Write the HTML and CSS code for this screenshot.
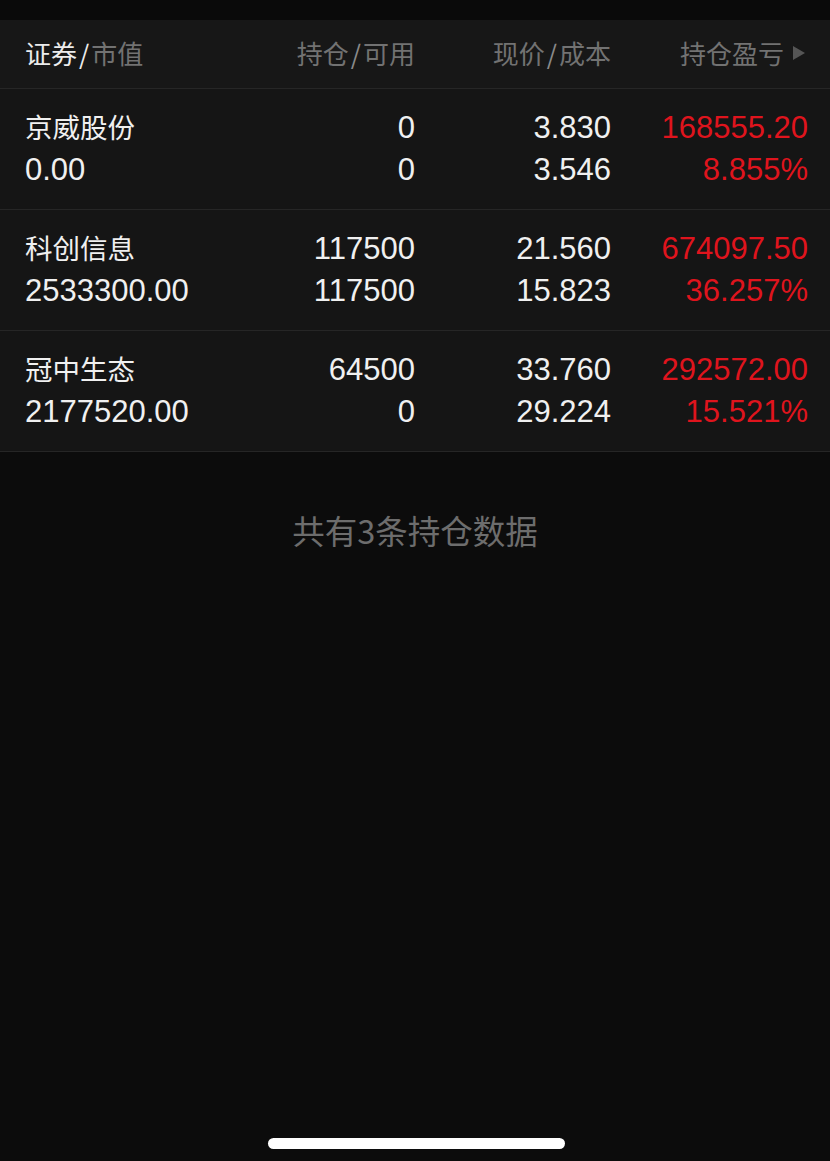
FILE: index.html
```html
<!DOCTYPE html>
<html lang="zh-CN">
<head>
<meta charset="utf-8">
<title>持仓</title>
<link rel="stylesheet" href="styles.css">
</head>
<body>
<div class="screen">
  <div class="statusbar"></div>
  <div class="thead">
    <div class="hcell left"><span class="hl">证券</span><span class="sep">/</span>市值</div>
    <div class="hcell">持仓<span class="sep">/</span>可用</div>
    <div class="hcell">现价<span class="sep">/</span>成本</div>
    <div class="hcell last">持仓盈亏<span class="tri"></span></div>
  </div>
  <div class="row">
    <div class="c left cjk">京威股份</div>
    <div class="c">0</div>
    <div class="c">3.830</div>
    <div class="c red">168555.20</div>
    <div class="c left">0.00</div>
    <div class="c">0</div>
    <div class="c">3.546</div>
    <div class="c red">8.855%</div>
  </div>
  <div class="row">
    <div class="c left cjk">科创信息</div>
    <div class="c">117500</div>
    <div class="c">21.560</div>
    <div class="c red">674097.50</div>
    <div class="c left">2533300.00</div>
    <div class="c">117500</div>
    <div class="c">15.823</div>
    <div class="c red">36.257%</div>
  </div>
  <div class="row">
    <div class="c left cjk">冠中生态</div>
    <div class="c">64500</div>
    <div class="c">33.760</div>
    <div class="c red">292572.00</div>
    <div class="c left">2177520.00</div>
    <div class="c">0</div>
    <div class="c">29.224</div>
    <div class="c red">15.521%</div>
  </div>
  <div class="summary">共有3条持仓数据</div>
  <div class="home"></div>
</div>
</body>
</html>
```
FILE: styles.css
```css
* { box-sizing: border-box; }
html, body {
  margin: 0;
  padding: 0;
  background: #0c0c0c;
}
body {
  font-family: "Liberation Sans", "Noto Sans CJK SC", sans-serif;
  color: #efefef;
}
.screen {
  position: relative;
  width: 830px;
  height: 1161px;
  overflow: hidden;
  background: #0c0c0c;
}
.statusbar {
  height: 20px;
  background: #0a0a0a;
}
.thead {
  display: grid;
  grid-template-columns: 190px 200px 196px 197px;
  align-items: center;
  height: 69px;
  padding: 0 22px 0 25px;
  background: #171717;
  border-bottom: 1px solid #262626;
  font-family: "Noto Sans CJK SC", sans-serif;
  font-size: 26px;
  color: #727272;
  line-height: 30px;
}
.hcell {
  text-align: right;
  padding-bottom: 2px;
}
.hcell.left { text-align: left; }
.hl { color: #ececec; }
.sep {
  display: inline-block;
  margin: 0 2px;
  color: #8a8a8a;
}
.hl + .sep { color: #ececec; }
.hcell.last {
  display: flex;
  justify-content: flex-end;
  align-items: center;
  gap: 9px;
  padding-right: 3px;
}
.tri {
  width: 0;
  height: 0;
  border-top: 7.5px solid transparent;
  border-bottom: 7.5px solid transparent;
  border-left: 12px solid #555555;
}
.row {
  display: grid;
  grid-template-columns: 190px 200px 196px 197px;
  grid-auto-rows: 42px;
  padding: 18px 22px 18px 25px;
  height: 121px;
  background: #151515;
  border-bottom: 1px solid #262626;
  font-size: 31px;
  line-height: 42px;
}
.c {
  text-align: right;
  white-space: nowrap;
  color: #f0f0f0;
}
.c.left { text-align: left; }
.c.cjk {
  font-family: "Noto Sans CJK SC", sans-serif;
  font-size: 27.5px;
  line-height: 38px;
  padding-bottom: 4px;
}
.c.red { color: #df141d; }
.summary {
  margin-top: 57px;
  text-align: center;
  font-family: "Noto Sans CJK SC", sans-serif;
  font-size: 32.5px;
  line-height: 42px;
  color: #6d6d6d;
}
.home {
  position: absolute;
  left: 268px;
  bottom: 12px;
  width: 297px;
  height: 11px;
  border-radius: 6px;
  background: #ffffff;
}
```
